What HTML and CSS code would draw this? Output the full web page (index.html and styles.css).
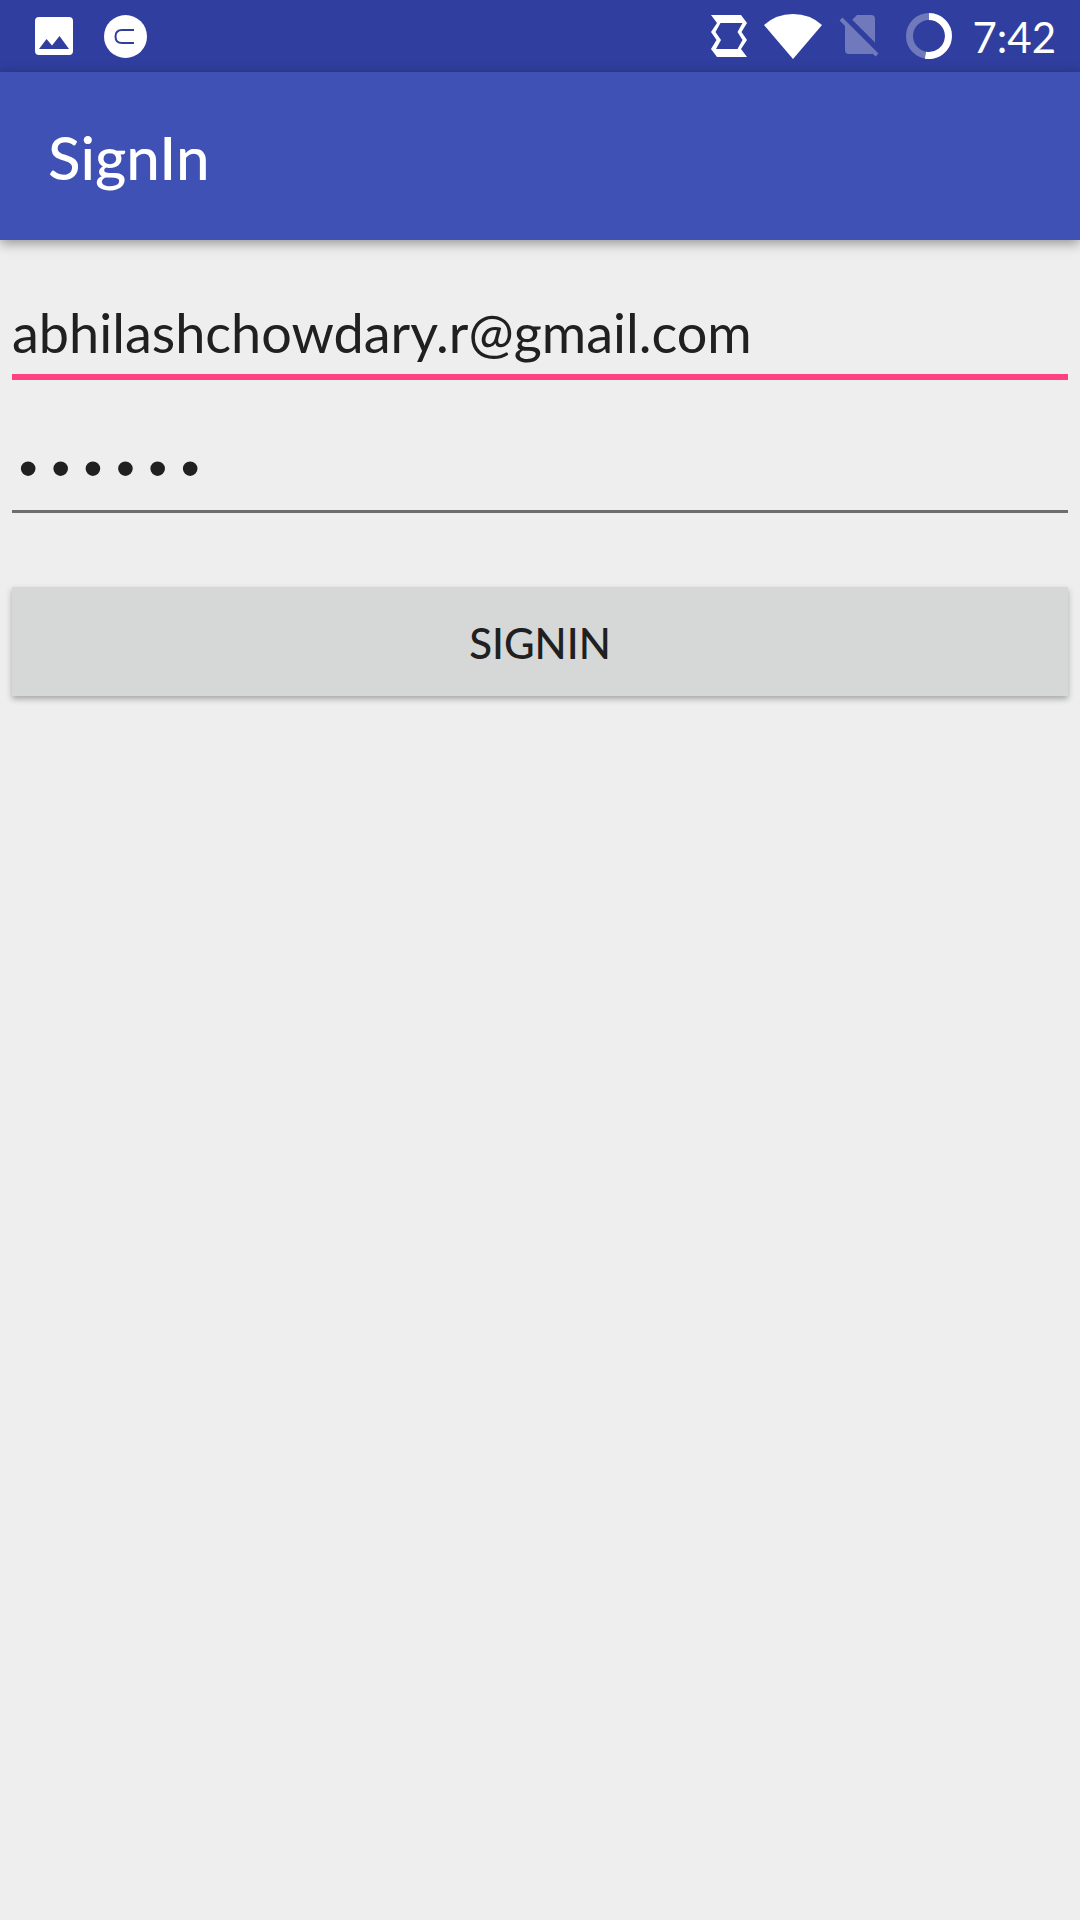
FILE: index.html
```html
<!DOCTYPE html>
<html lang="en">
<head>
  <meta charset="utf-8">
  <meta name="viewport" content="width=device-width, initial-scale=1">
  <title>SignIn</title>
  <link rel="stylesheet" href="styles.css">
</head>
<body>
  <div class="status-bar">
    <div class="status-group status-notifications">
      <svg class="icon-picture" viewBox="0 0 38 38" role="img" aria-label="Picture saved">
        <path fill="#fff" fill-rule="evenodd" d="M4 0H34Q38 0 38 4V34Q38 38 34 38H4Q0 38 0 34V4Q0 0 4 0ZM4 32H34L24.500 19L17 28.500L11.500 22Z"/>
      </svg>
      <svg class="icon-badge" viewBox="0 0 43 43" role="img" aria-label="App notification">
        <circle cx="21.500" cy="21.500" r="21.500" fill="#fff"/>
        <path d="M30 15H18Q11.500 15 11.500 21.500T18 28H30" fill="none" stroke="#303f9f" stroke-width="2"/>
      </svg>
    </div>
    <div class="status-group status-system">
      <svg class="icon-rotate" viewBox="0 0 36 42" role="img" aria-label="Vibrate">
        <path fill="#fff" fill-rule="evenodd" d="M0 0H30L36 8L30.500 17L36 25L30 34L36 42H6L0 34L5.500 25L0 17L6 8ZM9.500 8L4.500 17L10 25L5 34H26.500L31.500 25L26.500 17L31.500 8Z"/>
      </svg>
      <svg class="icon-wifi" viewBox="0 0 58 45" role="img" aria-label="Wi-Fi">
        <path fill="#fff" d="M0 11Q12 0 29 0T58 11L29 45Z"/>
      </svg>
      <svg class="icon-sim" viewBox="0 0 40 42" role="img" aria-label="No SIM card">
        <g fill="#7079bc">
          <path d="M18 0H32Q36 0 36 4V29L12 6Z"/>
          <path d="M6 10L35 38Q34 39 32 39H10Q6 39 6 35Z"/>
        </g>
        <path d="M5 0L40 35" stroke="#303f9f" stroke-width="5"/>
        <path d="M2 4L38 40" stroke="#7079bc" stroke-width="4"/>
      </svg>
      <svg class="icon-battery" viewBox="0 0 46 46" role="img" aria-label="Battery">
        <circle cx="23" cy="23" r="19.500" fill="none" stroke="#7079bc" stroke-width="7"/>
        <path d="M23 3.500A19.500 19.500 0 1 1 19.500 42.200" fill="none" stroke="#fff" stroke-width="7"/>
      </svg>
      <time class="clock" datetime="07:42">7:42</time>
    </div>
  </div>
  <header class="app-bar">
    <h1 class="app-title">SignIn</h1>
  </header>
  <main>
    <form class="sign-in">
      <input class="field field-active" type="email" aria-label="Email" value="abhilashchowdary.r@gmail.com" spellcheck="false">
      <input class="field field-password" type="password" aria-label="Password" value="secret">
      <button class="submit" type="button">SIGNIN</button>
    </form>
  </main>
</body>
</html>
```
FILE: styles.css
```css
* {
  box-sizing: border-box;
}

body {
  margin: 0;
  min-height: 100vh;
  background: #eee;
  color: #202020;
  font-family: Lato, "Open Sans", sans-serif;
}

svg {
  display: block;
  flex: none;
}

.status-bar {
  display: flex;
  align-items: center;
  justify-content: space-between;
  height: 72px;
  padding: 0 24px 0 35px;
  background: #303f9f;
}

.status-group {
  display: flex;
  align-items: center;
}

.status-notifications {
  gap: 31px;
}

.icon-picture {
  width: 38px;
  height: 38px;
}

.icon-badge {
  width: 43px;
  height: 43px;
}

.icon-rotate {
  width: 36px;
  height: 42px;
  margin-right: 17px;
}

.icon-wifi {
  width: 58px;
  height: 45px;
  margin-right: 17px;
}

.icon-sim {
  width: 40px;
  height: 42px;
  margin-right: 27px;
}

.icon-battery {
  width: 46px;
  height: 46px;
  margin-right: 20px;
}

.clock {
  padding-top: 2px;
  color: #fff;
  font-size: 42px;
  line-height: 52px;
}

.app-bar {
  display: flex;
  align-items: center;
  height: 168px;
  padding: 2px 48px 0;
  background: #3f51b5;
  box-shadow: 0 3px 12px rgba(0, 0, 0, 0.4);
}

.app-title {
  margin: 0;
  color: #fff;
  font-size: 60px;
  font-weight: 500;
  line-height: 72px;
}

.sign-in {
  display: flex;
  flex-direction: column;
  padding: 60px 12px;
}

.field {
  width: 100%;
  height: 80px;
  padding: 0 0 10px;
  border: 0;
  border-bottom: 3px solid #6d6d6d;
  border-radius: 0;
  outline: 0;
  background: transparent;
  color: inherit;
  font-family: inherit;
  font-size: 54px;
}

.field-active {
  border-bottom: 6px solid #ff4081;
}

.field-password {
  margin-top: 53px;
  padding: 2px 0 0;
  font-family: "Liberation Mono", monospace;
}

.submit {
  height: 109px;
  margin-top: 74px;
  padding: 2px 0 0;
  border: 0;
  background: #d6d8d7;
  box-shadow: 0 3px 6px rgba(0, 0, 0, 0.3);
  color: inherit;
  font-family: inherit;
  font-size: 42px;
  font-weight: 500;
}
```
